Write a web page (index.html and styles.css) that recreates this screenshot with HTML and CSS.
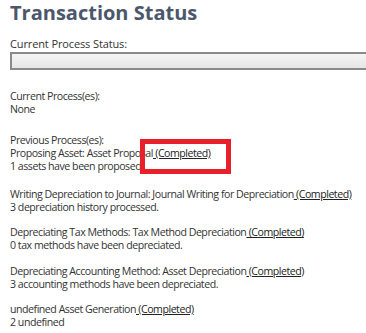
FILE: index.html
```html
<!DOCTYPE html>
<html lang="en">
<head>
    <meta charset="UTF-8">
    <meta name="viewport" content="width=device-width, initial-scale=1.0">
    <title>Transaction Status</title>
    <link rel="stylesheet" href="styles.css">
</head>
<body>
    <div class="status-page">
        <h1 class="page-title">Transaction Status</h1>
        <div class="field-label">Current Process Status:</div>
        <div class="status-bar"></div>

        <div class="section current">
            <div>Current Process(es):</div>
            <div>None</div>
        </div>

        <div class="section previous">
            <div>Previous Process(es):</div>
            <div class="process first">
                <div>Proposing Asset: Asset Proposal<a href="#" class="done"> (Completed)</a></div>
                <div>1 assets have been proposed.</div>
            </div>
            <div class="process">
                <div>Writing Depreciation to Journal: Journal Writing for Depreciation<a href="#" class="done"> (Completed)</a></div>
                <div>3 depreciation history processed.</div>
            </div>
            <div class="process">
                <div>Depreciating Tax Methods: Tax Method Depreciation<a href="#" class="done"> (Completed)</a></div>
                <div>0 tax methods have been depreciated.</div>
            </div>
            <div class="process">
                <div>Depreciating Accounting Method: Asset Depreciation<a href="#" class="done"> (Completed)</a></div>
                <div>3 accounting methods have been depreciated.</div>
            </div>
            <div class="process">
                <div>undefined Asset Generation<a href="#" class="done"> (Completed)</a></div>
                <div>2 undefined</div>
            </div>
        </div>
    </div>
    <div class="highlight-box"></div>
</body>
</html>
```

FILE: styles.css
```css
body, html {
    margin: 0;
    background-color: #fff;
}
body {
    font-family: "Open Sans", "DejaVu Sans", sans-serif;
    font-size: 11px;
    line-height: 12.75px;
    color: #333;
    overflow: hidden;
    position: relative;
}
.status-page {
    padding: 0 0 0 10px;
    white-space: nowrap;
}
.page-title {
    margin: 0;
    padding-top: 3px;
    font-size: 20px;
    line-height: 19px;
    font-weight: 700;
    color: #4b576b;
}
.field-label {
    margin-top: 16px;
    letter-spacing: -0.12px;
}
.status-bar {
    height: 14px;
    width: 380px;
    border: 2px solid #8a8a8a;
    background: linear-gradient(#f4f4f4, #e6e6e6);
    margin-top: 1px;
}
.section {
    font-size: 10.6px;
    letter-spacing: -0.47px;
}
.section.current {
    margin-top: 20px;
}
.section.previous {
    margin-top: 19px;
}
.process {
    margin-bottom: 12.9px;
}
.process.first {
    margin-bottom: 15.5px;
}
.done {
    color: #222;
    text-decoration: underline;
}
.highlight-box {
    position: absolute;
    left: 140px;
    top: 139px;
    width: 81px;
    height: 25px;
    border: 5px solid #e8202a;
}
```
